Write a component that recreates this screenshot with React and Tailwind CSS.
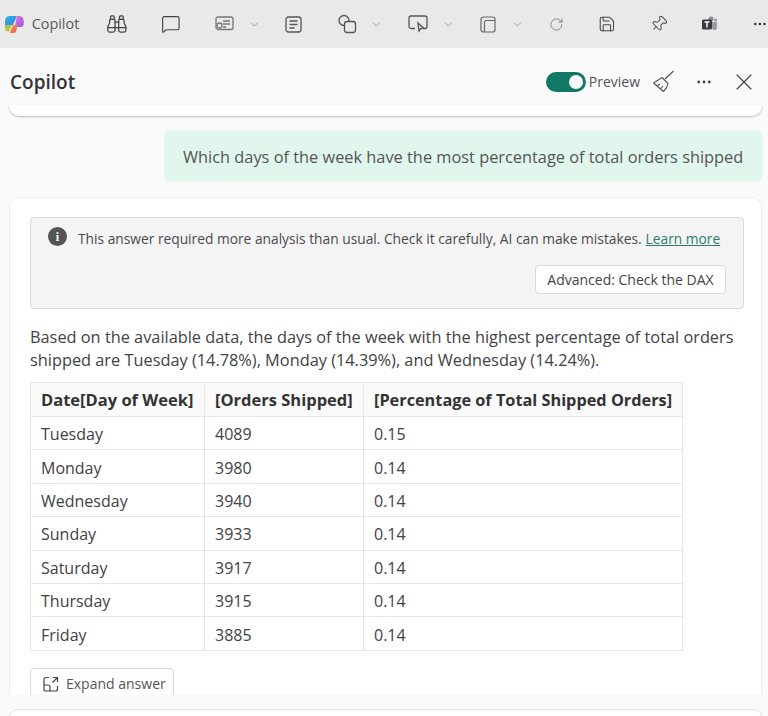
import { Binoculars, ChevronDown, MessageSquare, MoreHorizontal, Pin, RotateCw, Save, X } from "lucide-react";

const rows = [
  ["Tuesday", "4089", "0.15"],
  ["Monday", "3980", "0.14"],
  ["Wednesday", "3940", "0.14"],
  ["Sunday", "3933", "0.14"],
  ["Saturday", "3917", "0.14"],
  ["Thursday", "3915", "0.14"],
  ["Friday", "3885", "0.14"],
];

const CopilotLogo = () => (
  <svg width="21" height="21" viewBox="0 0 21 21">
    <defs>
      <linearGradient id="cpA" x1="0" y1="0" x2="1" y2="1">
        <stop offset="0" stopColor="#2fb6e8" />
        <stop offset="1" stopColor="#3c7be0" />
      </linearGradient>
      <linearGradient id="cpB" x1="0" y1="0" x2="1" y2="1">
        <stop offset="0" stopColor="#e874d8" />
        <stop offset="1" stopColor="#8f5be8" />
      </linearGradient>
      <linearGradient id="cpC" x1="0" y1="0" x2="1" y2="1">
        <stop offset="0" stopColor="#7fc65a" />
        <stop offset="1" stopColor="#f2c230" />
      </linearGradient>
      <linearGradient id="cpD" x1="0" y1="0" x2="1" y2="1">
        <stop offset="0" stopColor="#f7a030" />
        <stop offset="1" stopColor="#ee4f6e" />
      </linearGradient>
    </defs>
    <path d="M6 2h7l-4 9H1V7c0-3 2-5 5-5z" fill="url(#cpA)" />
    <path d="M13 2h2c3 0 5 2 5 5v4l-2 2h-7z" fill="url(#cpB)" />
    <path d="M1 11h7l-3 7c-2 0-4-2-4-4z" fill="url(#cpC)" />
    <path d="M9 11h5l-2 7c-1 1-2 1-3 1H6z" fill="url(#cpD)" />
  </svg>
);

const Chevron = ({ className }) => <ChevronDown size={13} strokeWidth={1.5} className={`text-[#8a8a8a] ${className}`} />;

const TextBubble = () => (
  <svg width="19" height="17" viewBox="0 0 19 17" fill="none" stroke="#777" strokeWidth="1.3">
    <rect x="1" y="1" width="17" height="12.5" rx="2" />
    <path d="M8 5h7M8 8h7M8 11h3" />
    <circle cx="4.5" cy="9.5" r="2.5" fill="#e9e9e9" />
  </svg>
);

const Note = () => (
  <svg width="17" height="17" viewBox="0 0 17 17" fill="none" stroke="#555" strokeWidth="1.3">
    <rect x="1" y="1" width="15" height="15" rx="2.5" />
    <path d="M4.5 5h8M4.5 8.5h8M4.5 12h5" />
  </svg>
);

const Shapes = () => (
  <svg width="20" height="20" viewBox="0 0 20 20" fill="none" stroke="#555" strokeWidth="1.3">
    <circle cx="7" cy="6.5" r="5" />
    <rect x="7.5" y="7.5" width="11" height="11" rx="2.5" fill="#e9e9e9" />
  </svg>
);

const Screen = () => (
  <svg width="20" height="18" viewBox="0 0 20 18" fill="none" stroke="#555" strokeWidth="1.3">
    <path d="M7 13.5H3a2 2 0 0 1-2-2V3a2 2 0 0 1 2-2h14a2 2 0 0 1 2 2v8.5a2 2 0 0 1-2 2h-2" />
    <path d="M10 8l1 8 1.8-2.500 2.700-.5z" />
  </svg>
);

const Layers = () => (
  <svg width="16" height="17" viewBox="0 0 16 17" fill="none" stroke="#666" strokeWidth="1.2">
    <rect x="1" y="1" width="14" height="15" rx="2.5" />
    <path d="M4.500 16V6.500a2 2 0 0 1 2-2H15" />
  </svg>
);

const TeamsLogo = () => (
  <svg width="17" height="16" viewBox="0 0 17 16">
    <circle cx="10" cy="3" r="2.500" fill="#8a8a9a" />
    <circle cx="14.500" cy="4" r="1.800" fill="#a9a9b5" />
    <path d="M9 6h7v5a2.500 2.500 0 0 1-5 1z" fill="#9a9aa8" />
    <rect x="1" y="3.500" width="10" height="10" rx="1.500" fill="#3a3a3a" />
    <path d="M3.500 6h5M6 6v5.500" stroke="#fff" strokeWidth="1.400" fill="none" />
  </svg>
);

const Broom = () => (
  <svg width="23" height="23" viewBox="0 0 23 23" fill="none" stroke="#555" strokeWidth="1.100" strokeLinejoin="round">
    <path d="M21.500 1L13 9" />
    <path d="M10 7.500l6 6c-.5 3-2 5.500-4.500 8L1.500 13c3-1.800 5.500-3.500 8.500-5.500z" />
    <path d="M5 16l3-2M8.500 19l2.500-3" />
  </svg>
);

const ExpandIcon = () => (
  <svg width="16" height="16" viewBox="0 0 16 16" fill="none" stroke="#444" strokeWidth="1.200">
    <path d="M6 1.500H3a2 2 0 0 0-2 2v9.500a2 2 0 0 0 2 2h9.500a2 2 0 0 0 2-2V10" />
    <path d="M1 9h4a2 2 0 0 1 2 2v4" />
    <path d="M10 1.500h4.500V6M14.500 1.500L9.500 6.500" />
  </svg>
);

const App = () => {
  return (
    <div className="w-[768px] h-[716px] overflow-hidden flex flex-col bg-[#fafafa] text-[#424242] font-['Open_Sans','Noto_Sans',sans-serif]">
      {/* Ribbon */}
      <div className="h-[48px] shrink-0 bg-[#e9e9e9] flex items-center pl-[4px] text-[#555]">
        <CopilotLogo />
        <span className="ml-[7px] text-[14.400px] text-[#5a5a5a]">Copilot</span>
        <Binoculars size={22} strokeWidth={1.4} className="ml-[27px] text-[#444]" />
        <MessageSquare size={20} strokeWidth={1.4} className="ml-[33px] text-[#444]" />
        <span className="ml-[34px] flex"><TextBubble /></span>
        <Chevron className="ml-[14px]" />
        <span className="ml-[24px] flex"><Note /></span>
        <span className="ml-[35px] flex"><Shapes /></span>
        <Chevron className="ml-[13px]" />
        <span className="ml-[26px] flex"><Screen /></span>
        <Chevron className="ml-[14px]" />
        <span className="ml-[25px] flex"><Layers /></span>
        <Chevron className="ml-[15px]" />
        <RotateCw size={15} strokeWidth={1.4} className="ml-[25px] text-[#777]" />
        <Save size={18} strokeWidth={1.4} className="ml-[34px] text-[#444]" />
        <Pin size={18} strokeWidth={1.3} className="ml-[35px] rotate-45 text-[#444]" />
        <span className="ml-[33px] flex"><TeamsLogo /></span>
        <MoreHorizontal size={16} strokeWidth={1.8} className="ml-[34px] text-[#333]" />
      </div>

      {/* Pane header */}
      <div className="h-[57px] shrink-0 flex items-center pl-[10px] pr-[10px]">
        <h1 className="text-[19px] font-semibold text-[#333] mt-[12px]">Copilot</h1>
        <div className="ml-auto mt-[10px] flex items-center">
          <div className="w-[40px] h-[20px] rounded-full bg-[#117865] flex items-center justify-end pr-[3px]">
            <div className="w-[14px] h-[14px] rounded-full bg-white" />
          </div>
          <span className="ml-[3px] text-[14px] text-[#555]">Preview</span>
          <span className="ml-[12px] flex"><Broom /></span>
          <MoreHorizontal size={18} strokeWidth={1.8} className="ml-[20px] text-[#444]" />
          <X size={28} strokeWidth={1} className="ml-[17px] text-[#444]" />
        </div>
      </div>

      {/* Scrolled-away previous card */}
      <div className="h-[11px] shrink-0 mx-[9px] w-[753px] bg-white rounded-b-[10px] shadow-[0_1px_2px_rgba(0,0,0,0.25)]" />

      {/* User question */}
      <div className="shrink-0 mt-[14px] flex justify-end pr-[5px]">
        <div className="h-[52px] w-[599px] bg-[#e1f6ec] rounded-[8px] flex items-center pl-[19px] pt-[2px] text-[16.350px] text-[#555] whitespace-nowrap">
          Which days of the week have the most percentage of total orders shipped
        </div>
      </div>

      {/* Answer card */}
      <div className="h-[498px] shrink-0 mt-[15px] mx-[9px] w-[753px] bg-white rounded-t-[10px] border border-b-0 border-[#eeeeee] pt-[19px] pl-[20px] overflow-hidden">
        <div className="h-[92px] w-[714px] bg-[#f4f4f4] border border-[#d9d9d9] rounded-[4px] pt-[9px] pl-[17px] pr-[17px]">
          <div className="flex items-start text-[13.770px] text-[#4a4a4a] whitespace-nowrap">
            <span className="w-[19px] h-[19px] rounded-full bg-[#555] text-white text-[12px] font-bold flex items-center justify-center font-['Liberation_Serif',serif]">i</span>
            <span className="ml-[11px] mt-[2px]">This answer required more analysis than usual. Check it carefully, AI can make mistakes.</span>
            <a className="ml-[4px] mt-[2px] text-[#2c7d6b] underline">Learn more</a>
          </div>
          <div className="flex justify-end mt-[15px]">
            <button className="h-[29px] w-[191px] bg-white border border-[#d9d9d9] rounded-[4px] text-[14px] text-[#444] whitespace-nowrap">
              Advanced: Check the DAX
            </button>
          </div>
        </div>

        <p className="mt-[17px] text-[16.330px] leading-[23px] text-[#424242] w-[720px]">
          Based on the available data, the days of the week with the highest percentage of total orders shipped are Tuesday (14.78%), Monday (14.39%), and Wednesday (14.24%).
        </p>

        <table className="mt-[10px] w-[652px] table-fixed border-collapse text-[16px] text-[#424242]">
          <colgroup>
            <col className="w-[174px]" />
            <col className="w-[159px]" />
            <col className="w-[319px]" />
          </colgroup>
          <thead>
            <tr className="h-[34px] bg-[#fafafa]">
              <th className="border border-[#e6e6e6] text-left pl-[10px] pt-[2px] text-[16.500px] font-bold text-[#333] whitespace-nowrap">Date[Day of Week]</th>
              <th className="border border-[#e6e6e6] text-left pl-[10px] pt-[2px] text-[16.500px] font-bold text-[#333] whitespace-nowrap">[Orders Shipped]</th>
              <th className="border border-[#e6e6e6] text-left pl-[10px] pt-[2px] text-[16.300px] font-bold text-[#333] whitespace-nowrap">[Percentage of Total Shipped Orders]</th>
            </tr>
          </thead>
          <tbody>
            {rows.map((r) => (
              <tr key={r[0]} className="h-[33.400px]">
                <td className="border border-[#e6e6e6] pl-[10px] pt-[2px]">{r[0]}</td>
                <td className="border border-[#e6e6e6] pl-[10px] pt-[2px]">{r[1]}</td>
                <td className="border border-[#e6e6e6] pl-[10px] pt-[2px]">{r[2]}</td>
              </tr>
            ))}
          </tbody>
        </table>

        <button className="mt-[17px] h-[32px] w-[144px] bg-white border border-[#d9d9d9] rounded-[4px] flex items-center pl-[12px] text-[14px] text-[#555] whitespace-nowrap">
          <ExpandIcon />
          <span className="ml-[7px]">Expand answer</span>
        </button>
      </div>

      {/* Input box peeking in */}
      <div className="mt-[14px] mx-[9px] w-[753px] h-[30px] shrink-0 bg-white rounded-t-[8px] border border-[#e0e0e0]" />
    </div>
  );
};

export default App;
